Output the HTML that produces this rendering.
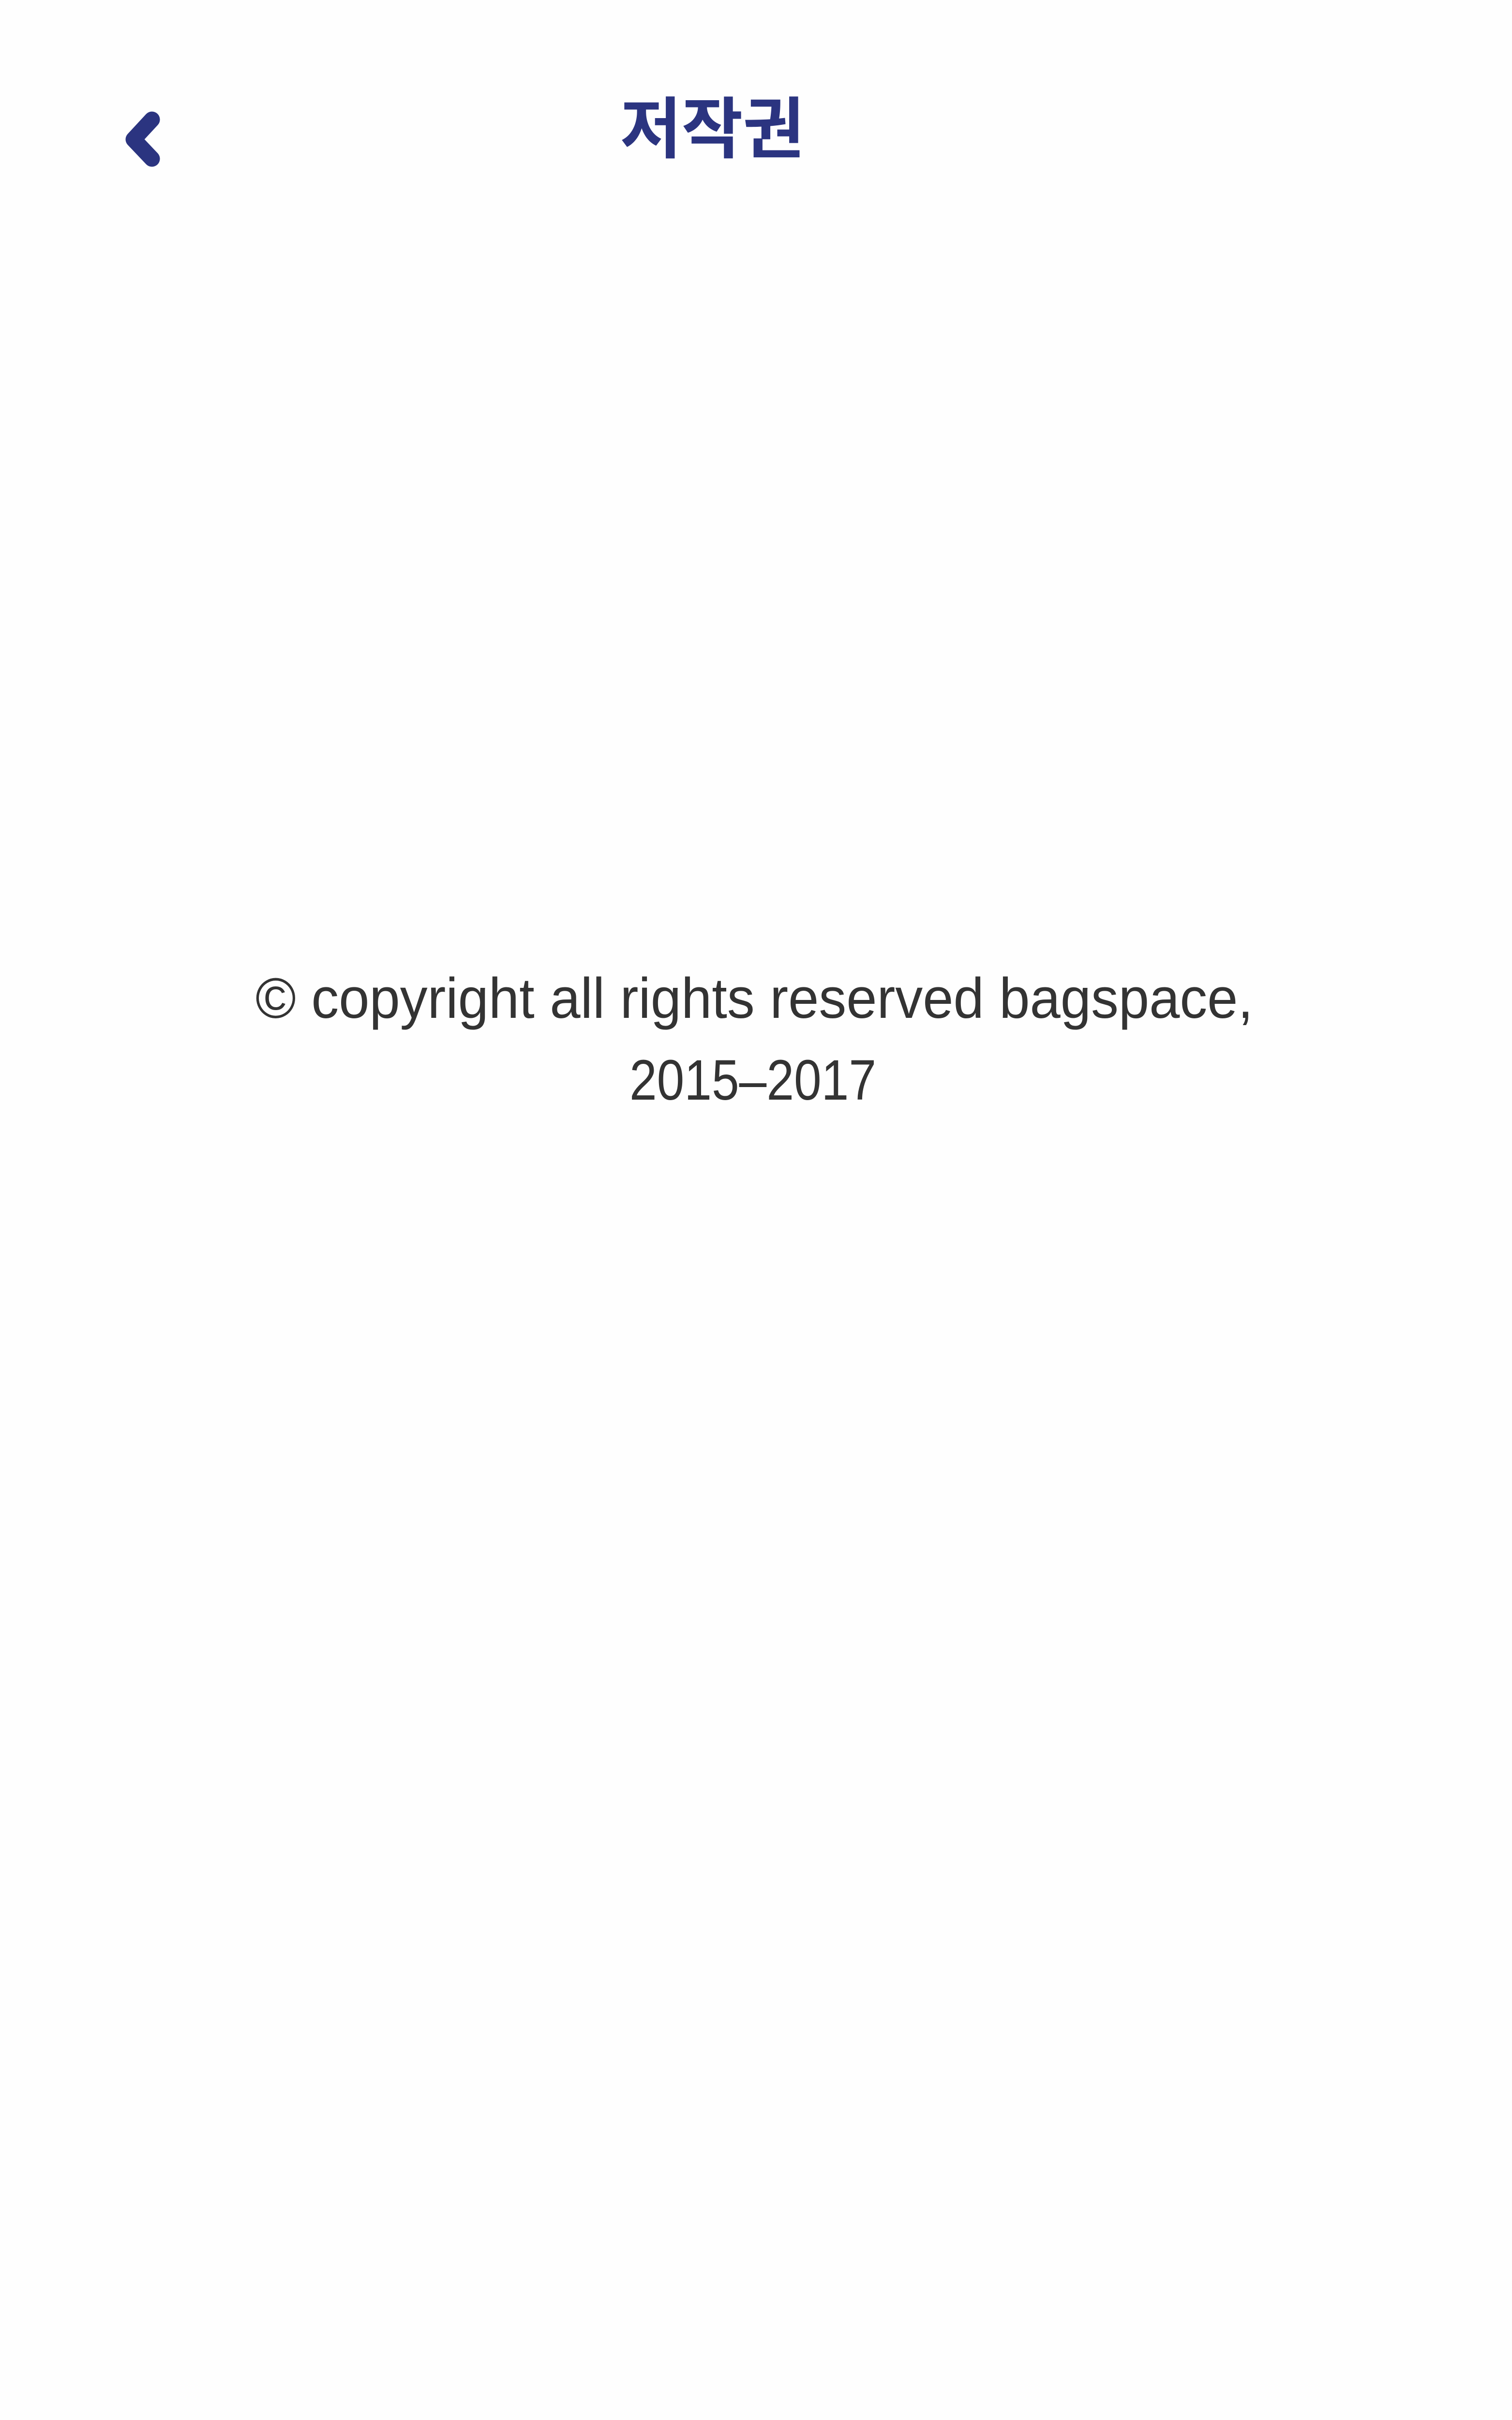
<!DOCTYPE html>
<html><head><meta charset="utf-8"><style>
html,body{margin:0;padding:0;background:#fff;width:3125px;height:5558px;overflow:hidden}
svg{display:block}
</style></head><body>
<svg width="3125" height="5558" viewBox="0 0 3125 5558" xmlns="http://www.w3.org/2000/svg">
<rect width="3125" height="5558" fill="#fefefe"/>
<path d="M314,247 L276,288 L314,328" fill="none" stroke="#2b3480" stroke-width="33" stroke-linecap="round" stroke-linejoin="round"/>
<text x="1472" y="315" text-anchor="middle" font-family="'Liberation Sans','Noto Sans CJK KR',sans-serif" font-weight="bold" font-size="138" fill="#2b3480">저작권</text>
<text x="528" y="2103" textLength="2062" lengthAdjust="spacingAndGlyphs" font-family="'Liberation Sans',sans-serif" font-size="118" fill="#333">© copyright all rights reserved bagspace,</text>
<text x="1301" y="2272" textLength="510" lengthAdjust="spacingAndGlyphs" font-family="'Liberation Sans',sans-serif" font-size="118" fill="#333">2015–2017</text>
</svg>
</body></html>
